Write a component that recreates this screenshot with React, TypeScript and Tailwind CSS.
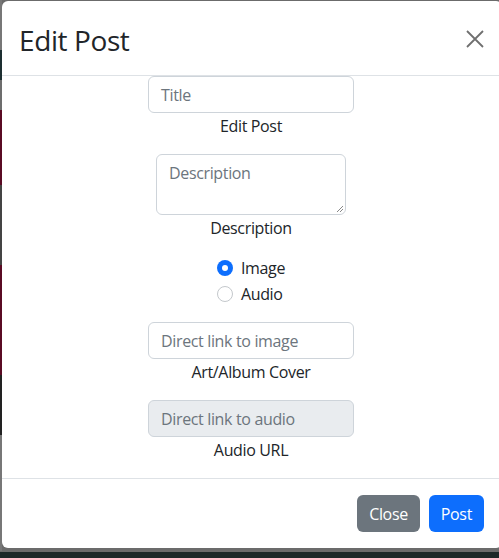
import React from "react";

export default function App() {
  const font = { fontFamily: '"Segoe UI", "Open Sans", "Noto Sans", sans-serif' };
  return (
    <div className="w-[499px] h-[558px] overflow-hidden bg-[#6b6b6b] flex flex-col tracking-[-0.35px]" style={font}>
      <div className="flex h-[551px]">
        <div className="w-[2px] shrink-0 flex flex-col">
          <div className="h-[50px] bg-[#777]" />
          <div className="h-[30px] bg-[#1d2f31]" />
          <div className="h-[30px] bg-[#6d6d6d]" />
          <div className="h-[75px] bg-[#5a0b24]" />
          <div className="h-[80px] bg-[#444]" />
          <div className="h-[110px] bg-[#5a0b24]" />
          <div className="h-[60px] bg-[#222]" />
          <div className="flex-1 bg-[#777]" />
        </div>
        <div className="w-[500px] shrink-0 mt-[1px] h-[547px] bg-white rounded-[6px] flex flex-col text-[#212529]">
          <div className="h-[75px] shrink-0 border-b border-[#dee2e6] flex items-center justify-between pl-[17px] pr-[16px]">
            <h1 className="text-[28px] leading-none font-normal tracking-[-0.4px] mt-[4px]">Edit Post</h1>
            <svg width="18" height="18" viewBox="0 0 18 18" className="mr-[2px] mt-[2px]">
              <path d="M1 1 L17 17 M17 1 L1 17" stroke="#6f6f6f" strokeWidth="1.8" />
            </svg>
          </div>
          <div className="flex flex-col items-center text-[16px] pr-[2px]">
            <div className="w-[206px] h-[37px] border border-[#ced4da] rounded-[6px] px-[12px] flex items-center text-[#6c757d]">Title</div>
            <div className="h-[26px] leading-[26px]">Edit Post</div>
            <div className="mt-[15px] w-[190px] h-[61px] border border-[#ced4da] rounded-[6px] px-[12px] pt-[6px] text-[#6c757d] relative">
              Description
              <svg className="absolute right-[1px] bottom-[1px]" width="8" height="8" viewBox="0 0 8 8">
                <path d="M7 1 L1 7 M7 4 L4 7" stroke="#888" strokeWidth="1" />
              </svg>
            </div>
            <div className="h-[26px] leading-[26px]">Description</div>
            <div className="mt-[14px] flex flex-col items-start">
              <div className="flex items-center gap-[8px] h-[26px]">
                <span className="w-[16px] h-[16px] rounded-full bg-[#0d6efd] flex items-center justify-center">
                  <span className="w-[6px] h-[6px] rounded-full bg-white" />
                </span>
                <span>Image</span>
              </div>
              <div className="flex items-center gap-[8px] h-[26px]">
                <span className="w-[16px] h-[16px] rounded-full border border-[#c4c8cc] bg-white" />
                <span>Audio</span>
              </div>
            </div>
            <div className="mt-[15px] w-[206px] h-[37px] border border-[#ced4da] rounded-[6px] px-[12px] flex items-center text-[#6c757d]">Direct link to image</div>
            <div className="h-[26px] leading-[26px]">Art/Album Cover</div>
            <div className="mt-[15px] w-[206px] h-[37px] border border-[#ced4da] bg-[#e9ecef] rounded-[6px] px-[12px] flex items-center text-[#6c757d]">Direct link to audio</div>
            <div className="h-[26px] leading-[26px]">Audio URL</div>
          </div>
          <div className="mt-[15px] border-t border-[#dee2e6] flex-1 flex items-start justify-end pt-[16px] pr-[18px] gap-[9px]">
            <button className="h-[37px] px-[12px] rounded-[6px] bg-[#6c757d] text-white text-[16px]">Close</button>
            <button className="h-[37px] px-[12px] rounded-[6px] bg-[#0d6efd] text-white text-[16px]">Post</button>
          </div>
        </div>
      </div>
      <div className="h-[1px]" />
      <div className="flex-1 bg-[#1c2828]" />
    </div>
  );
}
